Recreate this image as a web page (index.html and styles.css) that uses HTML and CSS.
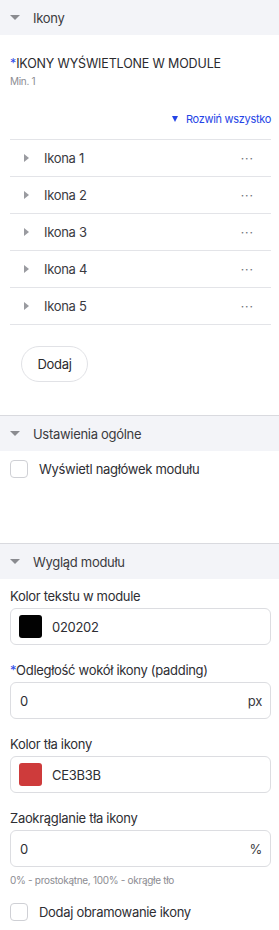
FILE: index.html
```html
<!DOCTYPE html>
<html lang="pl">
<head>
<meta charset="utf-8">
<link rel="stylesheet" href="styles.css">
</head>
<body>
<section class="sec">
  <div class="sec-head"><span class="caret-down"></span>Ikony</div>
  <div class="sec-body icons-body">
    <div class="req-title"><span class="star">*</span>IKONY WYŚWIETLONE W MODULE</div>
    <div class="hint">Min. 1</div>
    <div class="expand-row"><span class="blue-caret"></span>Rozwiń wszystko</div>
    <ul class="list">
      <li class="row"><span class="caret-right"></span><span class="row-name">Ikona 1</span><span class="dots">···</span></li>
      <li class="row"><span class="caret-right"></span><span class="row-name">Ikona 2</span><span class="dots">···</span></li>
      <li class="row"><span class="caret-right"></span><span class="row-name">Ikona 3</span><span class="dots">···</span></li>
      <li class="row"><span class="caret-right"></span><span class="row-name">Ikona 4</span><span class="dots">···</span></li>
      <li class="row"><span class="caret-right"></span><span class="row-name">Ikona 5</span><span class="dots">···</span></li>
    </ul>
    <button class="add-btn">Dodaj</button>
  </div>
</section>
<section class="sec bordered">
  <div class="sec-head"><span class="caret-down"></span>Ustawienia ogólne</div>
  <div class="sec-body general-body">
    <label class="check"><span class="box"></span>Wyświetl nagłówek modułu</label>
  </div>
</section>
<section class="sec bordered">
  <div class="sec-head"><span class="caret-down"></span>Wygląd modułu</div>
  <div class="sec-body look-body">
    <div class="field">
      <div class="label">Kolor tekstu w module</div>
      <div class="input"><span class="swatch black"></span><span class="val">020202</span></div>
    </div>
    <div class="field">
      <div class="label"><span class="star">*</span>Odległość wokół ikony (padding)</div>
      <div class="input"><span class="val num">0</span><span class="unit">px</span></div>
    </div>
    <div class="field">
      <div class="label">Kolor tła ikony</div>
      <div class="input"><span class="swatch red"></span><span class="val">CE3B3B</span></div>
    </div>
    <div class="field">
      <div class="label">Zaokrąglanie tła ikony</div>
      <div class="input"><span class="val num">0</span><span class="unit">%</span></div>
      <div class="help">0% - prostokątne, 100% - okrągłe tło</div>
    </div>
    <label class="check"><span class="box"></span>Dodaj obramowanie ikony</label>
  </div>
</section>
</body>
</html>
```
FILE: styles.css
```css
* { box-sizing: border-box; }
html, body { margin: 0; padding: 0; background: #fff; }
body {
  width: 279px;
  font-family: Inter, "Noto Sans", sans-serif;
  color: #2e2e33;
  letter-spacing: -0.3px;
}
.sec.bordered { border-top: 1px solid #d9dadf; }
.sec-head {
  background: #f3f4f8;
  height: 35px;
  display: flex;
  align-items: center;
  padding-left: 10px;
  font-size: 13px;
  color: #3b3b40;
}
.caret-down {
  width: 0; height: 0;
  border-left: 5px solid transparent;
  border-right: 5px solid transparent;
  border-top: 5px solid #8a8b90;
  margin-right: 13px;
}
.sec-body { padding: 0 8px 0 10px; }
.icons-body { padding-top: 21px; padding-bottom: 33px; }
.req-title { font-size: 12.5px; color: #2a2a2e; line-height: 15px; letter-spacing: -0.15px; }
.star { color: #2f4ce8; }
.hint { font-size: 10px; color: #8c8c92; margin-top: 4px; line-height: 13px; }
.expand-row {
  display: flex; justify-content: flex-end; align-items: center;
  font-size: 11px; color: #2545e6; margin-top: 24px; line-height: 14px;
}
.blue-caret {
  width: 0; height: 0;
  border-left: 3.5px solid transparent;
  border-right: 3.5px solid transparent;
  border-top: 6px solid #2545e6;
  margin-right: 8px;
}
.list { list-style: none; margin: 13px 0 0 0; padding: 0; border-top: 1px solid #e3e4e8; }
.row {
  height: 37px; border-bottom: 1px solid #e3e4e8;
  display: flex; align-items: center; padding-left: 14px;
  font-size: 13px; color: #3a3a3f;
}
.caret-right {
  width: 0; height: 0;
  border-top: 4.5px solid transparent;
  border-bottom: 4.5px solid transparent;
  border-left: 5px solid #9a9ba0;
  margin-right: 15px;
}
.row-name { flex: 1; }
.dots { color: #707076; font-size: 12px; margin-right: 17px; letter-spacing: 1px; }
.add-btn {
  margin-top: 21px; margin-left: 11px;
  height: 36px; width: 67px; border-radius: 18px;
  border: 1px solid #e1e2e6; background: #fff;
  font-family: inherit; font-size: 13px; color: #2a2a2e; letter-spacing: -0.3px;
  padding: 0;
}
.general-body { padding-top: 9px; padding-bottom: 65px; }
.check { display: flex; align-items: center; font-size: 13px; color: #2e2e33; }
.box {
  width: 18px; height: 18px; border: 1px solid #cfd0d5; border-radius: 4px;
  margin-right: 11px; background: #fff;
}
.look-body { padding-top: 9px; padding-bottom: 10px; }
.field { margin-bottom: 17px; }
.label { font-size: 13px; line-height: 16px; color: #2e2e33; margin-bottom: 4px; }
.input {
  height: 37px; border: 1px solid #dcdde1; border-radius: 6px;
  display: flex; align-items: center; padding: 0 8px 0 8px;
  font-size: 13px; color: #2e2e33;
}
.swatch { width: 23px; height: 23px; border-radius: 3px; margin-right: 10px; }
.swatch.black { background: #020202; }
.swatch.red { background: #ce3b3b; }
.val { flex: 1; }
.val.num { padding-left: 1px; }
.unit { color: #3a3a3f; }
.help { font-size: 10px; color: #8c8c92; margin-top: 7px; line-height: 13px; }
.field:has(.help) { margin-bottom: 0; }
.look-body .check { margin-top: 16px; }
```
